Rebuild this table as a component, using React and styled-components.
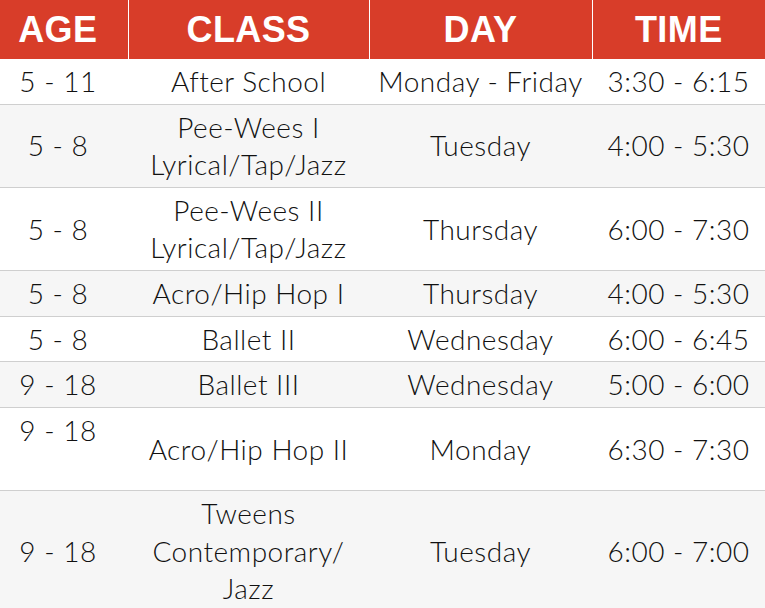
import React from "react";
import styled, { createGlobalStyle } from "styled-components";

const Global = createGlobalStyle`
  html, body { margin: 0; padding: 0; background: #ffffff; }
  body { font-family: Lato, "Open Sans", sans-serif; }
`;

const Table = styled.table`
  width: 765px;
  border-collapse: collapse;
  table-layout: fixed;
  font-family: Lato, "Open Sans", sans-serif;
  color: #111;
`;

const HeadCell = styled.th`
  background: #d83d29;
  color: #ffffff;
  font-family: "Liberation Sans", Arial, sans-serif;
  font-weight: 700;
  font-size: 36px;
  line-height: 59px;
  height: 59px;
  padding: ${(p) => (p.$first ? "0 12px 0 0" : "0")};
  text-align: center;
  border-left: ${(p) => (p.$first ? "none" : "1px solid #ffffff")};
  letter-spacing: 0.4px;
`;

const Row = styled.tr`
  background: ${(p) => (p.$alt ? "#f6f6f6" : "#ffffff")};
  border-bottom: 1px solid #cfcfcf;
`;

const Cell = styled.td`
  font-size: 28px;
  font-weight: 300;
  letter-spacing: 0.5px;
  line-height: 37.6px;
  padding: ${(p) => (p.$first ? "4px 12px 3px 0" : "4px 0 3px")};
  text-align: center;
  vertical-align: ${(p) => (p.$top ? "top" : "middle")};
`;

const rows = [
  { age: "5 - 11", cls: ["After School"], day: "Monday - Friday", time: "3:30 - 6:15" },
  { age: "5 - 8", cls: ["Pee-Wees I", "Lyrical/Tap/Jazz"], day: "Tuesday", time: "4:00 - 5:30" },
  { age: "5 - 8", cls: ["Pee-Wees II", "Lyrical/Tap/Jazz"], day: "Thursday", time: "6:00 - 7:30" },
  { age: "5 - 8", cls: ["Acro/Hip Hop I"], day: "Thursday", time: "4:00 - 5:30" },
  { age: "5 - 8", cls: ["Ballet II"], day: "Wednesday", time: "6:00 - 6:45" },
  { age: "9 - 18", cls: ["Ballet III"], day: "Wednesday", time: "5:00 - 6:00" },
  { age: "9 - 18", cls: ["Acro/Hip Hop II"], day: "Monday", time: "6:30 - 7:30", tall: true },
  { age: "9 - 18", cls: ["Tweens", "Contemporary/", "Jazz"], day: "Tuesday", time: "6:00 - 7:00" },
];

export default function App() {
  return (
    <>
      <Global />
      <Table>
        <colgroup>
          <col style={{ width: 128 }} />
          <col style={{ width: 241 }} />
          <col style={{ width: 223 }} />
          <col style={{ width: 173 }} />
        </colgroup>
        <thead>
          <tr>
            <HeadCell $first>AGE</HeadCell>
            <HeadCell>CLASS</HeadCell>
            <HeadCell>DAY</HeadCell>
            <HeadCell>TIME</HeadCell>
          </tr>
        </thead>
        <tbody>
          {rows.map((r, i) => (
            <Row key={i} $alt={i % 2 === 1}>
              <Cell $first $top={r.tall}>
                {r.age}
                {r.tall && (
                  <>
                    <br />
                    {"\u00a0"}
                  </>
                )}
              </Cell>
              <Cell>
                {r.cls.map((c, j) => (
                  <React.Fragment key={j}>
                    {j > 0 && <br />}
                    {c}
                  </React.Fragment>
                ))}
              </Cell>
              <Cell>{r.day}</Cell>
              <Cell>{r.time}</Cell>
            </Row>
          ))}
        </tbody>
      </Table>
    </>
  );
}
